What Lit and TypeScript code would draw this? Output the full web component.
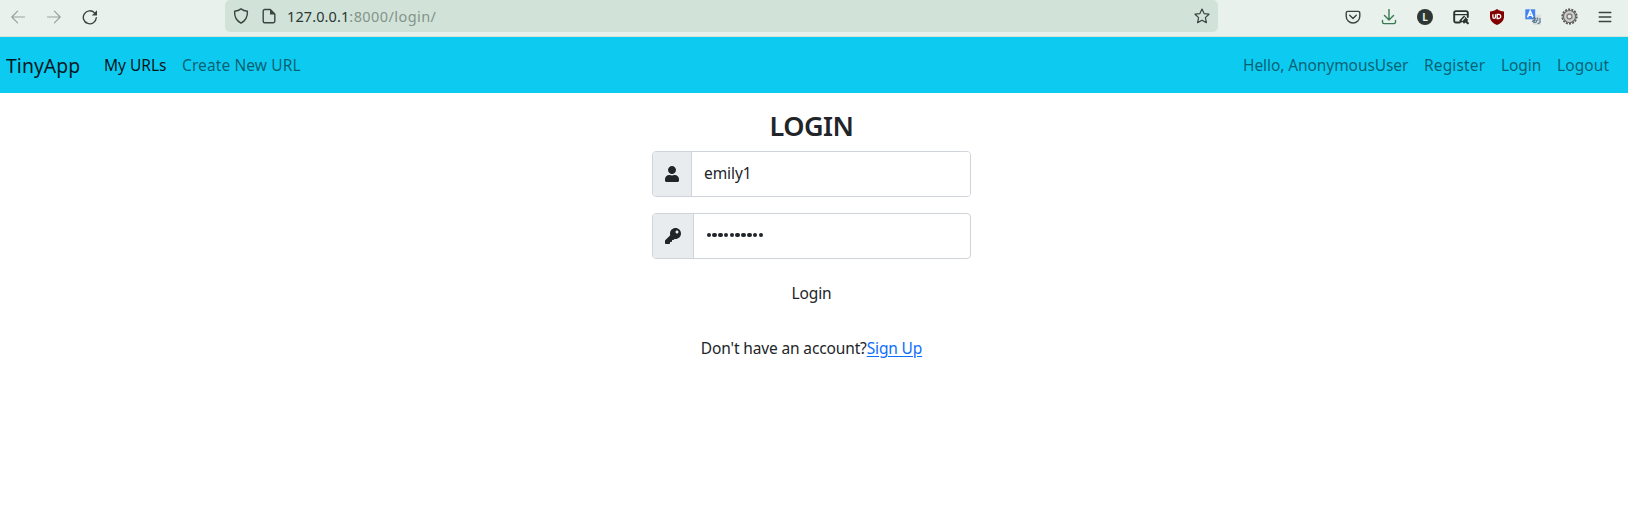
import { LitElement, html, css, svg } from "lit";
import { customElement } from "lit/decorators.js";

const line = (body: unknown, cls = "") => html`<svg class="line ${cls}" width="16" height="16" viewBox="0 0 16 16">${body}</svg>`;

const icons = {
  back: line(svg`<path d="M14.5 8H1.8M7.6 2.2L1.8 8l5.800 5.800"/>`, "dim"),
  forward: line(svg`<path d="M1.500 8H14.200M8.400 2.200L14.200 8l-5.800 5.800"/>`, "dim"),
  reload: line(svg`<path class="w15" d="M14.300 8.800A6.500 6.500 0 1 1 12.600 3.900"/><path class="fill" d="M15 1.300v5.200H9.800z"/>`),
  shield: line(svg`<path class="w15" d="M8 .9c1.900 1.500 4 2.200 6.400 2.400.3 5-1.500 9.300-6.400 11.900C3.100 12.600 1.300 8.300 1.600 3.300 4 3.100 6.100 2.400 8 .9z"/>`),
  page: line(svg`<path class="w15" d="M9.300 1.500H3.700a1.500 1.500 0 0 0-1.500 1.500v10.300a1.500 1.500 0 0 0 1.500 1.500h8.600a1.500 1.500 0 0 0 1.500-1.500V6z"/><path class="fill" d="M9 1.200L14.200 6.400H9z"/>`),
  star: line(svg`<path d="M8 1.100l2.100 4.500 4.900.6-3.600 3.400 1 5L8 12.200l-4.400 2.400 1-5L1 6.200l4.900-.6z"/>`),
  pocket: line(svg`<path class="w15" d="M2.700 2.400h10.600a1.500 1.500 0 0 1 1.500 1.500v3.300a6.800 6.800 0 0 1-13.600 0V3.900a1.500 1.500 0 0 1 1.500-1.500z"/><path class="w15" d="M4.700 6.300L8 9.400l3.300-3.100"/>`),
  download: line(svg`<path class="w15" d="M8 .5v10.300M3.500 6.600L8 11l4.500-4.400M1.500 11.500V13a1.600 1.600 0 0 0 1.600 1.600h9.800a1.600 1.600 0 0 0 1.600-1.600v-1.500"/>`, "green"),
  account: html`<span class="account">L</span>`,
  editor: line(svg`<path class="w2" d="M6.500 13.500H3A1.800 1.800 0 0 1 1.200 11.700V3.900A1.800 1.800 0 0 1 3 2.100h10a1.800 1.800 0 0 1 1.800 1.800V8"/><path d="M1.200 5.600h13.600"/><path class="fill" d="M6.300 11.500L11 6.500l4.300 4.400-1.100 1.100 2 2.200-1.500 1.400-2.200-2.200-1.500 1.300-1.500-1.700-2.500 1z"/><path class="cut" d="M9.300 11.300l2.300-2.500"/>`, "dark"),
  ublock: html`<svg width="16" height="16" viewBox="0 0 16 16"><path fill="#800000" d="M8 0c2 1.500 4.300 2.300 7 2.500v5C15 11.500 12.500 14.200 8 16 3.500 14.200 1 11.500 1 7.500v-5C3.700 2.300 6 1.500 8 0z"/><path fill="none" stroke="#fff" stroke-width="1.300" d="M3.900 5.200v2.900a1.300 1.300 0 0 0 2.600 0V5.200M8.200 5.400v4.100h1.500a2 2 0 0 0 0-4.100z"/></svg>`,
  translate: html`<svg width="16" height="16" viewBox="0 0 16 16"><path fill="#dcdfe0" d="M6.500 5.800H16V16H8z"/><path fill="#4284f3" d="M.3.300h9.900v10H.3z"/><path fill="none" stroke="#fff" stroke-width="1.500" d="M2.500 8.400L5.200 2l2.700 6.400M3.400 6.300H7"/><path fill="none" stroke="#58788c" stroke-width="1.100" d="M7.500 9.200h4M9.500 7.500v5.200M7.300 13c.5-2.200 4-3.200 4.200-1 .1 1.800-2.700 2.200-3.500.4M12.700 8.500v3.200M15 9v4.500M12.500 14.600c2 0 2.800-1 2.800-2.500"/></svg>`,
  gear: html`<svg width="17" height="17" viewBox="0 0 17 17"><circle cx="8.500" cy="8.500" r="7.200" fill="none" stroke="#555" stroke-width="1.800" stroke-dasharray="2.100 1.131"/><circle cx="8.500" cy="8.500" r="6" fill="#bcbcbc" stroke="#696969" stroke-width="1.200"/><circle cx="8.500" cy="8.500" r="4.400" fill="none" stroke="#cfcfcf" stroke-width="1.500"/><circle cx="8.500" cy="8.500" r="2.400" fill="#e4e9e6" stroke="#7d7d7d" stroke-width="1.200"/></svg>`,
  menu: line(svg`<path class="w15" d="M2.200 3.500h11.600M2.200 8h11.600M2.200 12.500h11.600"/>`),
};

@customElement("browser-bar")
class BrowserBar extends LitElement {
  static styles = css`
    :host { display: flex; box-sizing: border-box; height: 37px; padding-right: 5px; background: #e8f1eb; border-bottom: 1px solid #d3e3d9; align-items: flex-start; color: #3b4540; }
    .cell { width: 36px; height: 33px; display: flex; align-items: center; justify-content: center; }
    .line { fill: none; stroke: currentColor; stroke-width: 1.2; stroke-linecap: round; stroke-linejoin: round; }
    .dim { color: #9aa29d; }
    .green { color: #387b50; }
    .dark { color: #2c3430; }
    .fill { fill: currentColor; stroke: none; }
    .w15 { stroke-width: 1.4; }
    .w2 { stroke-width: 1.9; }
    .cut { stroke: #e8f1eb; }
    .address { box-sizing: border-box; width: 993px; height: 32px; margin-left: 117px; padding: 0 0 0 2px; display: flex; align-items: center; border-radius: 5px; background: #d1e3d8; }
    .address .cell { width: 28px; }
    .address .cell:last-child { width: 32px; margin-left: auto; }
    .url { margin-left: 4px; font: 14.5px/20px "Noto Sans", sans-serif; color: #2c3631; letter-spacing: 0.1px; white-space: nowrap; }
    .rest { color: #85938b; letter-spacing: 0.42px; }
    .tools { display: flex; margin-left: auto; }
    .account { width: 16px; height: 16px; border-radius: 50%; background: #2e3733; color: #e8f1eb; font: 700 10px/16px "Noto Sans", sans-serif; text-align: center; }
  `;
  render() {
    const cell = (icon: unknown) => html`<span class="cell">${icon}</span>`;
    return html`
      ${[icons.back, icons.forward, icons.reload].map(cell)}
      <div class="address">
        ${cell(icons.shield)}${cell(icons.page)}
        <span class="url">127.0.0.1<span class="rest">:8000/login/</span></span>
        ${cell(icons.star)}
      </div>
      <div class="tools">
        ${[icons.pocket, icons.download, icons.account, icons.editor, icons.ublock, icons.translate, icons.gear, icons.menu].map(cell)}
      </div>`;
  }
}

@customElement("site-nav")
class SiteNav extends LitElement {
  static styles = css`
    :host { display: flex; box-sizing: border-box; height: 56px; padding: 0 10px 0 6px; align-items: center; background: #0dcaf0; font: 15.5px/24px "Noto Sans", sans-serif; }
    a { box-sizing: border-box; padding-left: 8px; white-space: nowrap; text-decoration: none; color: rgba(0, 0, 0, 0.55); }
    .brand { width: 90px; padding: 2px 0 0; font-size: 19.4px; line-height: 30px; letter-spacing: 0.05px; color: rgba(0, 0, 0, 0.9); }
    .urls { width: 78px; color: rgba(0, 0, 0, 0.9); }
    .create { letter-spacing: 0.1px; }
    .user { width: 181px; margin-left: auto; letter-spacing: -0.08px; }
    .register { width: 77px; letter-spacing: 0.14px; }
    .login { width: 56px; letter-spacing: -0.1px; }
    .logout { width: 69px; letter-spacing: 0.1px; }
  `;
  render() {
    return html`
      <a class="brand">TinyApp</a><a class="urls">My URLs</a><a class="create">Create New URL</a>
      <a class="user">Hello, AnonymousUser</a><a class="register">Register</a><a class="login">Login</a><a class="logout">Logout</a>`;
  }
}

@customElement("login-form")
class LoginForm extends LitElement {
  static styles = css`
    :host { display: flex; flex-direction: column; align-items: center; width: 319px; margin-left: 652px; padding-top: 16px; font: 15.5px/24px "Noto Sans", sans-serif; color: #212529; }
    h3 { margin: 0 0 8px; font-size: 27px; line-height: 34px; font-weight: 600; letter-spacing: -0.5px; }
    .group { display: flex; box-sizing: border-box; width: 319px; height: 46px; margin-bottom: 16px; border: 1px solid #ced4da; border-radius: 4px; overflow: hidden; }
    .addon { display: flex; box-sizing: border-box; align-items: center; padding: 0 12px; background: #e9ecef; border-right: 1px solid #ced4da; }
    .addon svg { display: block; fill: #212529; }
    input { flex: 1; min-width: 0; padding: 0 12px 2px; border: 0; outline: 0; background: #fff; color: #212529; font: inherit; letter-spacing: -0.08px; }
    .dots { display: flex; align-items: center; gap: 1.2px; padding: 0 0 2px 12.5px; }
    .dot { width: 4.6px; height: 4.6px; border-radius: 50%; background: #212529; }
    button { margin-top: 6px; padding: 0; border: 0; background: none; color: inherit; font: inherit; letter-spacing: -0.1px; }
    p { margin: 31px 0 0; white-space: nowrap; letter-spacing: -0.14px; }
    a { color: #0d6efd; text-decoration: underline; letter-spacing: -0.15px; text-underline-offset: 2px; }
  `;
  render() {
    return html`
      <h3>LOGIN</h3>
      <div class="group">
        <span class="addon"><svg width="14" height="16" viewBox="0 0 448 512"><path d="M224 256c70.700 0 128-57.300 128-128S294.700 0 224 0 96 57.300 96 128s57.300 128 128 128zm89.600 32h-16.700c-22.200 10.200-46.900 16-72.900 16s-50.600-5.800-72.900-16h-16.700C60.200 288 0 348.200 0 422.400V464c0 26.500 21.500 48 48 48h352c26.500 0 48-21.500 48-48v-41.600c0-74.200-60.200-134.400-134.400-134.400z"/></svg></span>
        <input value="emily1" />
      </div>
      <div class="group">
        <span class="addon"><svg width="16" height="16" viewBox="0 0 512 512"><path d="M512 176c0 97.200-78.800 176-176 176-11.200 0-22.200-1.100-32.800-3.100l-24 27A24 24 0 0 1 261.200 384H224v40c0 13.300-10.700 24-24 24h-40v40c0 13.300-10.700 24-24 24H24c-13.300 0-24-10.700-24-24v-78.100c0-6.400 2.500-12.500 7-17l161.800-161.800C163 213.800 160 195.300 160 176 160 78.800 238.800 0 336 0S512 78.800 512 176zM336 128c0 26.500 21.500 48 48 48s48-21.500 48-48-21.500-48-48-48-48 21.500-48 48z"/></svg></span>
        <span class="dots">${Array.from({ length: 10 }, () => html`<i class="dot"></i>`)}</span>
      </div>
      <button>Login</button>
      <p>Don't have an account?<a>Sign Up</a></p>`;
  }
}

@customElement("app-root")
class AppRoot extends LitElement {
  static styles = css`:host { display: block; min-height: 520px; background: #fff; }`;
  render() {
    return html`<browser-bar></browser-bar><site-nav></site-nav><login-form></login-form>`;
  }
}
